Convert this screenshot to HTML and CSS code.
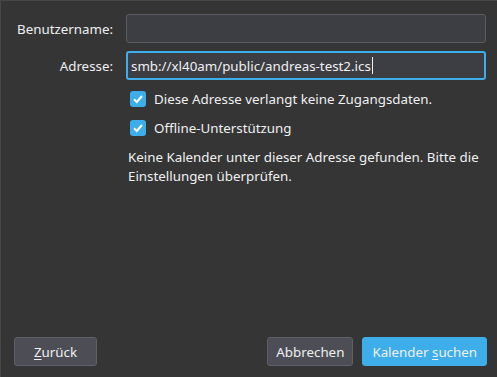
FILE: index.html
```html
<!DOCTYPE html>
<html lang="de">
<head>
<meta charset="utf-8">
<link rel="stylesheet" href="styles.css">
</head>
<body>
<div class="window">
  <div class="form">
    <label class="label">Benutzername:</label>
    <div class="input"></div>
    <label class="label">Adresse:</label>
    <div class="input focused"><span>smb://xl40am/public/andreas-test2.ics</span><span class="caret"></span></div>
    <div></div>
    <div class="options">
      <div class="check-row">
        <span class="check"><svg viewBox="0 0 16 16" width="16" height="16"><path d="M4 8.2 L6.8 11 L12 5" fill="none" stroke="#fff" stroke-width="2"/></svg></span>
        <span>Diese Adresse verlangt keine Zugangsdaten.</span>
      </div>
      <div class="check-row">
        <span class="check"><svg viewBox="0 0 16 16" width="16" height="16"><path d="M4 8.2 L6.8 11 L12 5" fill="none" stroke="#fff" stroke-width="2"/></svg></span>
        <span>Offline-Unterstützung</span>
      </div>
      <p class="message">Keine Kalender unter dieser Adresse gefunden. Bitte die Einstellungen überprüfen.</p>
    </div>
  </div>
  <div class="footer">
    <button class="btn"><u>Z</u>urück</button>
    <div class="right">
      <button class="btn">Abbrechen</button>
      <button class="btn primary">Kalender <u>s</u>uchen</button>
    </div>
  </div>
</div>
</body>
</html>
```
FILE: styles.css
```css
html, body {
  margin: 0;
  padding: 0;
  height: 100%;
  background: #353535;
}
body {
  font-family: "Noto Sans", "DejaVu Sans", sans-serif;
  font-size: 13.33px;
  color: #eff0f1;
}
.window {
  box-sizing: border-box;
  height: 100%;
  border-left: 1px solid #474747;
  border-top: 1px solid #474747;
  display: flex;
  flex-direction: column;
}
.form {
  display: grid;
  grid-template-columns: 112px 1fr;
  column-gap: 13px;
  row-gap: 8px;
  padding: 13px 11px 0 0;
  align-items: center;
}
.label {
  text-align: right;
}
.input {
  box-sizing: border-box;
  height: 29px;
  border: 1px solid #5c5d62;
  border-radius: 3px;
  background: #3d3e43;
  padding: 0 4px;
  display: flex;
  align-items: center;
}
.input.focused {
  border: 2px solid #3daee9;
  padding: 0 3px;
}
.caret {
  display: inline-block;
  width: 1px;
  height: 17px;
  background: #eff0f1;
  margin-left: 1px;
}
.options {
  display: flex;
  flex-direction: column;
  margin-top: -4px;
}
.check-row {
  display: flex;
  align-items: center;
  gap: 8px;
  height: 29px;
  padding-left: 4px;
}
.check {
  width: 16px;
  height: 16px;
  background: #3daee9;
  border-radius: 3px;
  display: flex;
}
.message {
  margin: 6px 0 0 2px;
  line-height: 19px;
}
.footer {
  margin-top: auto;
  display: flex;
  justify-content: space-between;
  padding: 0 10px 11px 13px;
}
.right {
  display: flex;
  gap: 9px;
}
.btn {
  font: inherit;
  color: #eff0f1;
  height: 29px;
  box-sizing: border-box;
  background: #4d4e55;
  border: 1px solid #5f6067;
  border-radius: 3px;
  padding: 0 8px;
}
.btn:first-child {
  min-width: 83px;
}
.btn.primary {
  background: #3daee9;
  border-color: #3daee9;
  padding: 0 9px;
}
u {
  text-underline-offset: 2px;
}
```
